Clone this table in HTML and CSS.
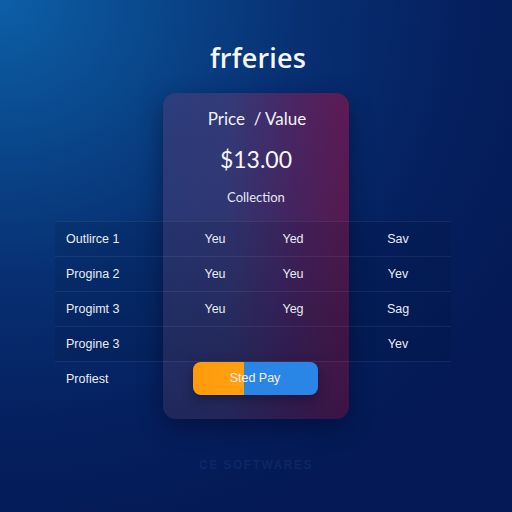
FILE: index.html
```html
<!DOCTYPE html>
<html>
<head>
<meta charset="utf-8">
<link rel="stylesheet" href="styles.css">
</head>
<body>
<div class="stage">
  <h1 class="title">frferies</h1>
  <div class="board">
    <div class="card"></div>
    <div class="card-head">
      <div class="price-label">Price &nbsp;/ Value</div>
      <div class="price">$13.00</div>
      <div class="collection">Collection</div>
    </div>
    <div class="row r1">
      <span class="label">Outlirce 1</span><span class="c2">Yeu</span><span class="c3">Yed</span><span class="c4">Sav</span>
    </div>
    <div class="row r2">
      <span class="label">Progina 2</span><span class="c2">Yeu</span><span class="c3">Yeu</span><span class="c4">Yev</span>
    </div>
    <div class="row r3">
      <span class="label">Progimt 3</span><span class="c2">Yeu</span><span class="c3">Yeg</span><span class="c4">Sag</span>
    </div>
    <div class="row r4">
      <span class="label">Progine 3</span><span class="c2"></span><span class="c3"></span><span class="c4">Yev</span>
    </div>
    <div class="row r5">
      <span class="label">Profiest</span><span class="btn-cell"><button class="pay">Sted Pay</button></span>
    </div>
  </div>
  <div class="footer">CE SOFTWARES</div>
</div>
</body>
</html>
```

FILE: styles.css
```css
html, body {
  margin: 0;
  padding: 0;
}
body {
  width: 512px;
  height: 512px;
  overflow: hidden;
}
.stage {
  width: 512px;
  height: 512px;
  display: flex;
  flex-direction: column;
  align-items: stretch;
  background:
    radial-gradient(ellipse 120% 110% at 0% 0%, #0c5fa8 0%, #0a4a8e 22%, #072f72 50%, #05205f 75%, #041955 100%);
  font-family: "Liberation Sans", Arial, sans-serif;
  color: #fff;
}
.title {
  margin: 42px 0 0;
  height: 32px;
  line-height: 32px;
  text-align: center;
  font-family: "Open Sans", sans-serif;
  font-weight: 600;
  font-size: 27px;
  letter-spacing: 0.2px;
  color: #f4f6fb;
  padding-left: 4px;
}
.board {
  margin-top: 19px;
  display: grid;
  grid-template-columns: 55px 108px 186px 102px 1fr;
  grid-template-rows: 128px 35px 35px 35px 35px 35px 23px;
}
.card {
  grid-column: 3 / 4;
  grid-row: 1 / 8;
  border-radius: 13px;
  background:
    linear-gradient(to bottom, rgba(10, 12, 50, 0) 0%, rgba(10, 12, 50, 0.12) 50%, rgba(12, 10, 45, 0.42) 100%),
    linear-gradient(90deg, #2c3d7d 0%, #343a78 35%, #4a2664 70%, #5e1a52 100%);
  box-shadow: 0 8px 24px rgba(0, 5, 30, 0.45);
}
.card-head {
  grid-column: 3 / 4;
  grid-row: 1;
  display: flex;
  flex-direction: column;
  align-items: center;
  padding-top: 15px;
  font-family: "Lato", sans-serif;
}
.price-label {
  font-size: 17px;
  line-height: 22px;
  color: #f1f1f7;
  padding-left: 2px;
}
.price {
  margin-top: 14px;
  font-size: 23px;
  line-height: 30px;
  color: #f6f6fa;
}
.collection {
  margin-top: 14px;
  font-size: 13px;
  line-height: 18px;
  color: #e6e6f0;
}
.row {
  grid-column: 2 / 5;
  display: grid;
  grid-template-columns: 125px 70px 86px 115px;
  align-items: center;
  border-top: 1px solid rgba(255, 255, 255, 0.07);
  background: rgba(0, 5, 30, 0.1);
  font-size: 12.5px;
  color: #e9ecf5;
}
.r1 { grid-row: 2; }
.r2 { grid-row: 3; }
.r3 { grid-row: 4; }
.r4 { grid-row: 5; }
.r5 { grid-row: 6; background: transparent; }
.label {
  padding-left: 11px;
}
.c2, .c3 {
  text-align: center;
}
.c4 {
  text-align: center;
  padding-left: 9px;
}
.btn-cell {
  grid-column: 2 / 4;
  display: flex;
  justify-content: center;
  padding-right: 6px;
}
.pay {
  width: 125px;
  height: 33px;
  margin-top: -2px;
  border: none;
  border-radius: 8px;
  background: linear-gradient(to right, #ff9b0b 0%, #ffa010 40.5%, #2a86e6 40.5%, #2a86e6 100%);
  color: #f4f2ee;
  font-family: "Liberation Sans", Arial, sans-serif;
  font-size: 12.5px;
  box-shadow: 0 4px 12px rgba(0, 0, 20, 0.35);
  padding: 0;
}
.footer {
  margin-top: 38px;
  line-height: 16px;
  text-align: center;
  font-weight: 700;
  font-size: 12px;
  letter-spacing: 1.5px;
  color: rgba(40, 75, 150, 0.25);
}
```
